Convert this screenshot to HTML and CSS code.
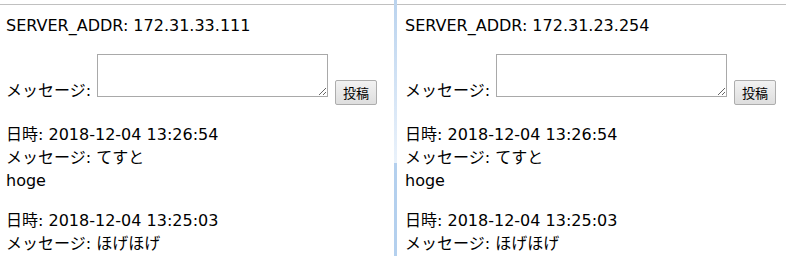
FILE: index.html
```html
<!DOCTYPE html>
<html lang="ja">

<head>
    <meta charset="UTF-8">
    <title>掲示板</title>
    <link rel="stylesheet" href="styles.css">
</head>

<body>
    <div class="screen">
        <div class="pane pane-left">
            <p class="server">SERVER_ADDR: 172.31.33.111</p>
            <form class="post-form">
                <label class="post-label">メッセージ:</label>
                <textarea class="post-text" name="message"></textarea>
                <button type="button" class="post-btn">投稿</button>
            </form>
            <div class="entry">
                日時: 2018-12-04 13:26:54<br>
                メッセージ: てすと<br>
                hoge
            </div>
            <div class="entry">
                日時: 2018-12-04 13:25:03<br>
                メッセージ: ほげほげ
            </div>
        </div>

        <div class="divider"></div>

        <div class="pane pane-right">
            <p class="server">SERVER_ADDR: 172.31.23.254</p>
            <form class="post-form">
                <label class="post-label">メッセージ:</label>
                <textarea class="post-text" name="message"></textarea>
                <button type="button" class="post-btn">投稿</button>
            </form>
            <div class="entry">
                日時: 2018-12-04 13:26:54<br>
                メッセージ: てすと<br>
                hoge
            </div>
            <div class="entry">
                日時: 2018-12-04 13:25:03<br>
                メッセージ: ほげほげ
            </div>
        </div>
    </div>
</body>

</html>
```

FILE: styles.css
```css
* {
    margin: 0;
    padding: 0;
    box-sizing: border-box;
}

html,
body {
    height: 256px;
    overflow: hidden;
    background-color: white;
}

body {
    font-family: 'DejaVu Sans', 'Noto Sans CJK JP', sans-serif;
    font-size: 16px;
    line-height: 23px;
    color: #000;
}

.screen {
    display: flex;
    height: 256px;
}

.pane {
    margin-top: 4px;
    border-top: 1px solid #c0c0c0;
    padding-top: 9px;
    overflow: hidden;
}

.pane-left {
    width: 394px;
    padding-left: 6px;
}

.pane-right {
    flex: 1;
    padding-left: 8px;
}

.divider {
    width: 3px;
    flex-shrink: 0;
    background: linear-gradient(to bottom, #bad3ee 0, #eaf2fb 163px, #b4d0ee 163px, #b4d0ee 100%);
}

.server {
    white-space: nowrap;
}

.post-form {
    display: flex;
    align-items: flex-end;
    margin-top: 17px;
    white-space: nowrap;
}

.post-label {
    margin-bottom: 3px;
}

.post-text {
    width: 231px;
    height: 43px;
    margin: 0 7px 8px 6px;
    padding: 2px;
    border: 1px solid #a9a9a9;
    border-radius: 0;
    font-family: 'DejaVu Sans', 'Noto Sans CJK JP', sans-serif;
    font-size: 13px;
    resize: both;
}

.post-btn {
    width: 42px;
    height: 25px;
    border: 1px solid #adadad;
    border-radius: 2px;
    background: linear-gradient(to bottom, #f2f2f2, #dedede);
    color: #000;
    font-family: 'Noto Sans CJK JP', sans-serif;
    font-size: 13px;
    line-height: 1;
}

.entry {
    margin-top: 18px;
    white-space: nowrap;
}

.entry + .entry {
    margin-top: 17px;
}
```
